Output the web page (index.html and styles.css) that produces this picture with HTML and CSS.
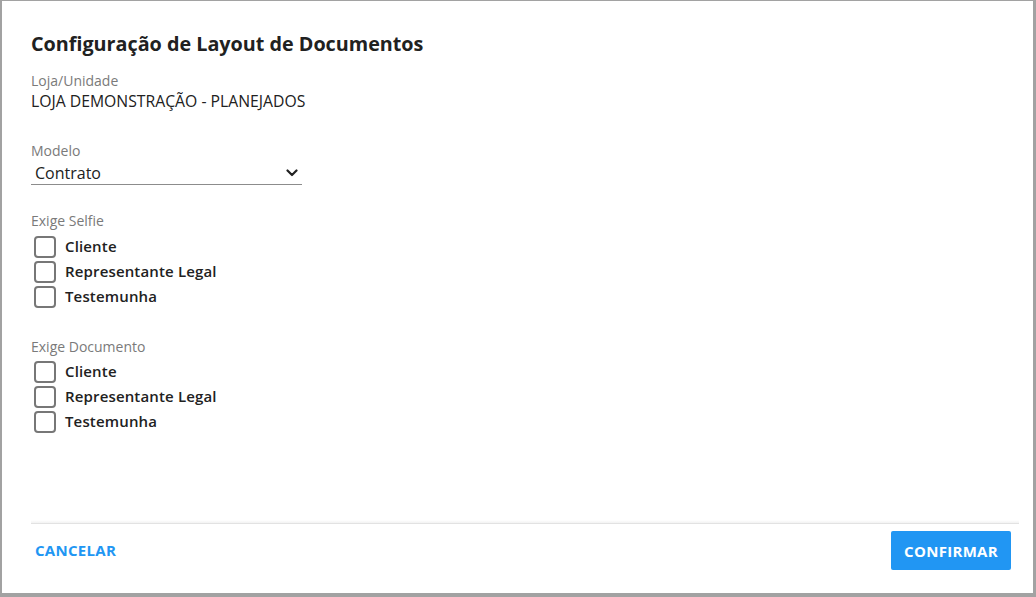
FILE: index.html
```html
<!DOCTYPE html>
<html lang="pt-BR">
<head>
<meta charset="utf-8">
<title>Configuração de Layout de Documentos</title>
<link rel="stylesheet" href="styles.css">
</head>
<body>
<div class="dialog">
  <div class="content">
    <h1 class="title">Configuração de Layout de Documentos</h1>

    <div class="field-label first">Loja/Unidade</div>
    <div class="field-value">LOJA DEMONSTRAÇÃO - PLANEJADOS</div>

    <div class="field-label modelo">Modelo</div>
    <div class="select">
      <span class="select-text">Contrato</span>
      <svg class="chevron" width="12" height="8" viewBox="0 0 12 8"><polyline points="1.5,1.5 6,6 10.5,1.5" fill="none" stroke="#222" stroke-width="2.2" stroke-linecap="round" stroke-linejoin="round"/></svg>
    </div>

    <div class="field-label group">Exige Selfie</div>
    <div class="checks">
      <label class="check"><span class="box"></span><span class="check-text">Cliente</span></label>
      <label class="check"><span class="box"></span><span class="check-text">Representante Legal</span></label>
      <label class="check"><span class="box"></span><span class="check-text">Testemunha</span></label>
    </div>

    <div class="field-label group2">Exige Documento</div>
    <div class="checks">
      <label class="check"><span class="box"></span><span class="check-text">Cliente</span></label>
      <label class="check"><span class="box"></span><span class="check-text">Representante Legal</span></label>
      <label class="check"><span class="box"></span><span class="check-text">Testemunha</span></label>
    </div>
  </div>

  <div class="footer">
    <div class="divider"></div>
    <div class="actions">
      <button class="btn-text">CANCELAR</button>
      <button class="btn-primary">CONFIRMAR</button>
    </div>
  </div>
</div>
</body>
</html>
```

FILE: styles.css
```css
html, body {
  margin: 0;
  padding: 0;
}
body {
  background: #a2a2a2;
  width: 1036px;
  height: 597px;
  overflow: hidden;
  font-family: "Open Sans", "Noto Sans", sans-serif;
  color: #212121;
}
.dialog {
  box-sizing: border-box;
  margin: 1px 0 0 2px;
  width: 1031px;
  height: 592px;
  background: #ffffff;
  display: flex;
  flex-direction: column;
}
.content {
  flex: 1;
  padding: 29px 0 0 29px;
}
.title {
  margin: 0;
  font-size: 19.75px;
  line-height: 28px;
  font-weight: 700;
  color: #212121;
}
.field-label {
  font-size: 14px;
  line-height: 20px;
  color: #7a7a7a;
}
.field-label.first { margin-top: 13px; }
.field-label.modelo { margin-top: 30px; }
.field-label.group { margin-top: 26px; margin-bottom: 3px; }
.field-label.group2 { margin-top: 28px; margin-bottom: 2px; }
.field-value {
  font-size: 15.75px;
  line-height: 20px;
  color: #212121;
}
.select {
  width: 271px;
  height: 23px;
  box-sizing: content-box;
  border-bottom: 1px solid #8c8c8c;
  display: flex;
  align-items: center;
  justify-content: space-between;
}
.select-text {
  padding-left: 4px;
  font-size: 16px;
  line-height: 20px;
  color: #212121;
  font-weight: 500;
}
.chevron {
  margin-right: 4px;
  margin-top: 1px;
}
.checks {
  display: flex;
  flex-direction: column;
}
.check {
  display: flex;
  align-items: center;
  height: 25px;
}
.box {
  box-sizing: border-box;
  width: 22px;
  height: 22px;
  margin-left: 3px;
  border: 2px solid #777777;
  border-radius: 4px;
}
.check-text {
  margin-left: 9px;
  padding-bottom: 2px;
  font-size: 15px;
  letter-spacing: 0.15px;
  font-weight: 600;
  color: #212121;
}
.footer {
  padding: 0 14px 0 29px;
}
.divider {
  height: 3px;
  background: linear-gradient(to bottom, rgba(0,0,0,0), rgba(0,0,0,0.05));
  border-bottom: 1px solid #e2e2e2;
}
.actions {
  display: flex;
  justify-content: space-between;
  align-items: flex-start;
  padding: 7px 8px 0 0;
  height: 69px;
  box-sizing: border-box;
}
.btn-text {
  margin-top: 9px;
  border: none;
  background: none;
  padding: 0 4px;
  font-family: inherit;
  font-size: 15px;
  letter-spacing: 0.3px;
  font-weight: 700;
  color: #2196f3;
  line-height: 20px;
}
.btn-primary {
  border: none;
  background: #2196f3;
  color: #ffffff;
  font-family: inherit;
  font-size: 15px;
  letter-spacing: 0.3px;
  font-weight: 700;
  width: 120px;
  height: 39px;
  border-radius: 2px;
}
```
